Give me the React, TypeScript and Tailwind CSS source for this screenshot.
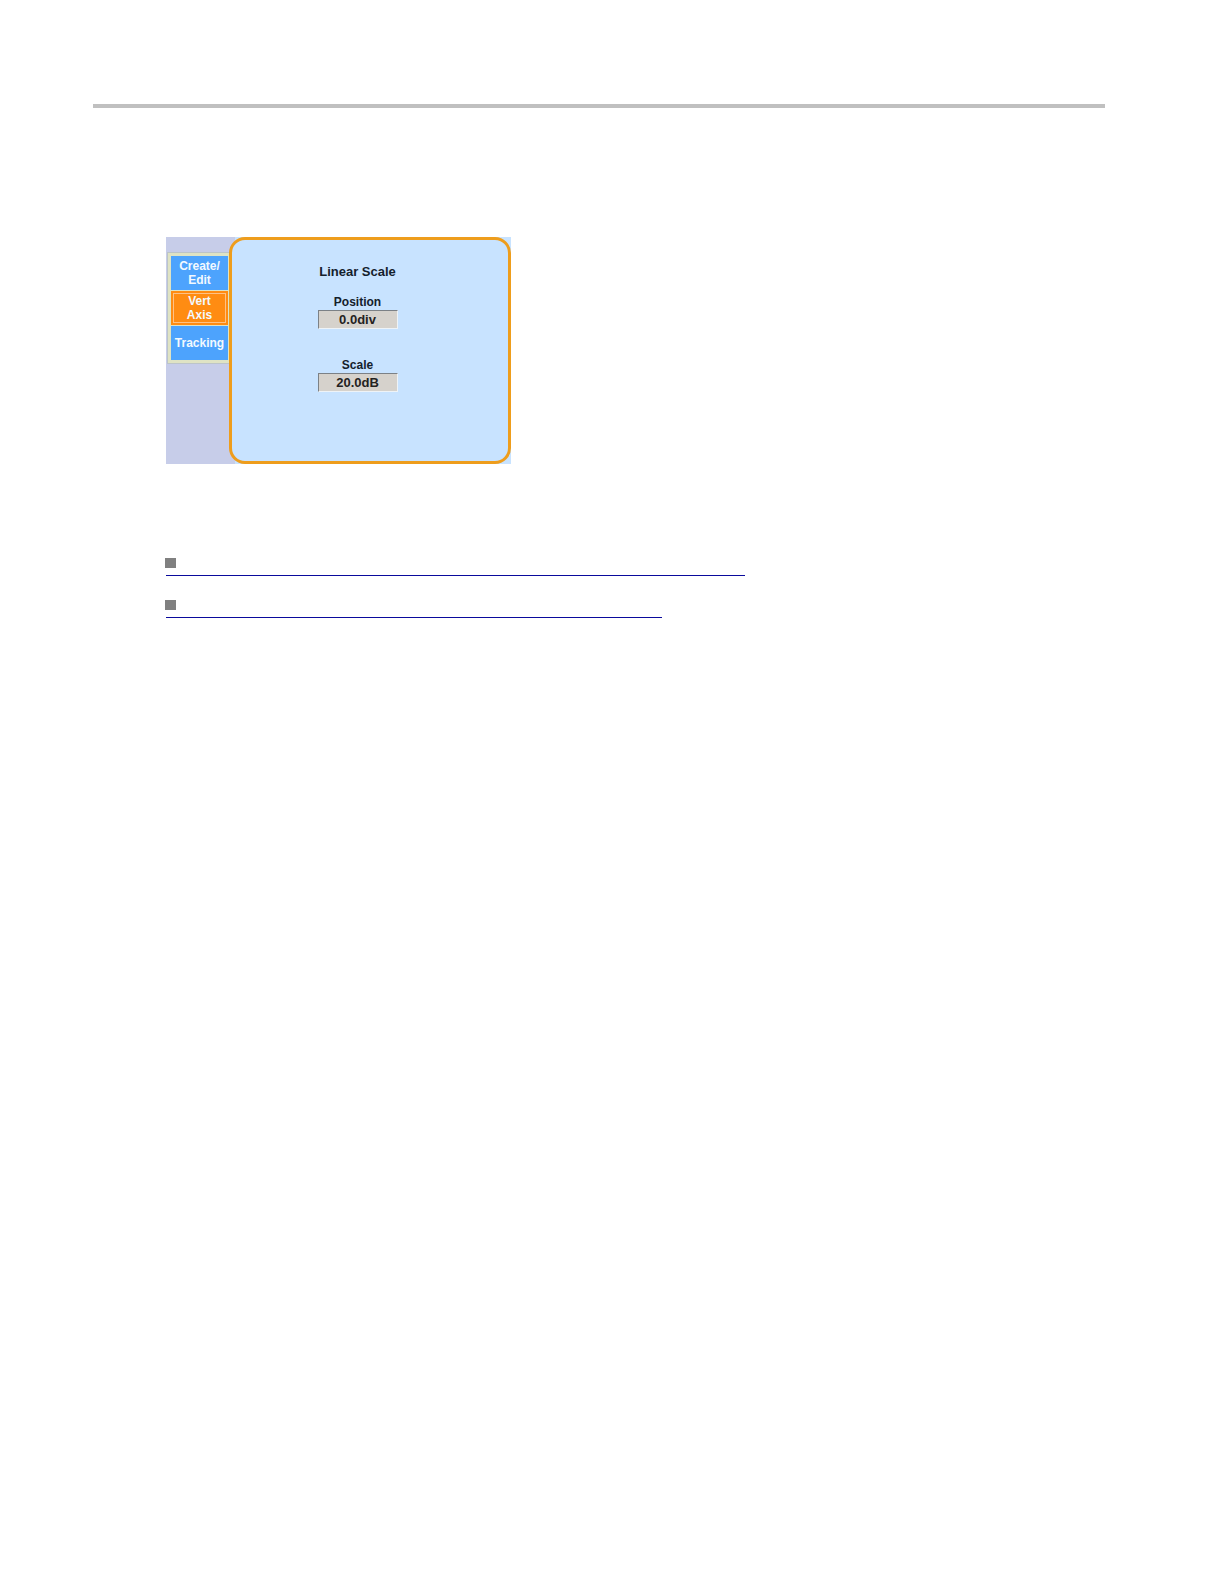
import { useState } from 'react';
import { clsx } from 'clsx';

const TABS = [
  { id: 'create', lines: ['Create/', 'Edit'] },
  { id: 'vert', lines: ['Vert', 'Axis'] },
  { id: 'tracking', lines: ['Tracking'] },
];

const LINKS = [
  { id: 'first', label: 'First related topic', width: 'w-[579px]' },
  { id: 'second', label: 'Second related topic', width: 'w-[496px]' },
];

type FieldProps = {
  id: string;
  label: string;
  value: string;
  onChange: (value: string) => void;
};

function Field({ id, label, value, onChange }: FieldProps) {
  return (
    <div className="flex w-20 flex-col items-center">
      <label htmlFor={id} className="text-[12px] leading-[16px] text-[#14202c]">
        {label}
      </label>
      <input
        id={id}
        type="text"
        value={value}
        onChange={(event) => onChange(event.target.value)}
        className="h-[19px] w-full border border-t-[#7c8186] border-r-[#eef3f7] border-b-[#eef3f7] border-l-[#7c8186] bg-[#d6d2cc] text-center text-[13px] text-[#24221f]"
      />
    </div>
  );
}

function ControlWindow() {
  const [tab, setTab] = useState('vert');
  const [position, setPosition] = useState('0.0div');
  const [scale, setScale] = useState('20.0dB');

  return (
    <div className="flex h-[227px] w-[345px] max-w-full bg-linear-to-r from-[#c7cde9] from-20% to-[#c8e3ff] to-20% font-bold">
      <div className="w-[63px] shrink-0 bg-[#c7cde9] pt-[15px] pl-px">
        <div className="flex flex-col gap-px border border-r-0 border-[#bcc4c8] bg-[#dfe3c4] py-[3px] pr-px pl-[3px]">
          {TABS.map((item) => (
            <button
              key={item.id}
              type="button"
              aria-pressed={tab === item.id}
              onClick={() => setTab(item.id)}
              className={clsx(
                'flex h-[34px] flex-col items-center justify-center text-[12px] leading-[14px] text-[#f2f9ff]',
                tab === item.id
                  ? 'bg-[#ff8c12] outline outline-offset-[-3px] outline-[#ffc184]'
                  : 'bg-[#4da3fd]',
              )}
            >
              {item.lines.map((line) => (
                <span key={line}>{line}</span>
              ))}
            </button>
          ))}
        </div>
      </div>

      <div className="flex flex-1 flex-col items-center rounded-2xl border-3 border-[#ee9d1c] bg-[#c8e3ff] pt-[24px] pr-[25px]">
        <h2 className="text-[13px] leading-[16px] text-[#14202c]">Linear Scale</h2>
        <div className="mt-[14px] flex flex-col gap-[28px]">
          <Field id="position" label="Position" value={position} onChange={setPosition} />
          <Field id="scale" label="Scale" value={scale} onChange={setScale} />
        </div>
      </div>
    </div>
  );
}

export default function App() {
  return (
    <div className="min-h-screen bg-white pt-[104px] pr-[119px] pl-[93px] font-['Liberation_Sans',Arial,sans-serif]">
      <hr className="h-1 border-0 bg-[#c0c0c0]" />
      <main className="pt-[129px] pl-[73px]">
        <ControlWindow />
        <ul className="-ml-px flex flex-col gap-6 pt-[94px]">
          {LINKS.map((link) => (
            <li key={link.id}>
              <span className="block h-[10px] w-[11px] bg-[#808080]" />
              <a
                href="#"
                aria-label={link.label}
                className={clsx('ml-px block h-2 max-w-full border-b border-[#0a0a9c]', link.width)}
              />
            </li>
          ))}
        </ul>
      </main>
    </div>
  );
}
